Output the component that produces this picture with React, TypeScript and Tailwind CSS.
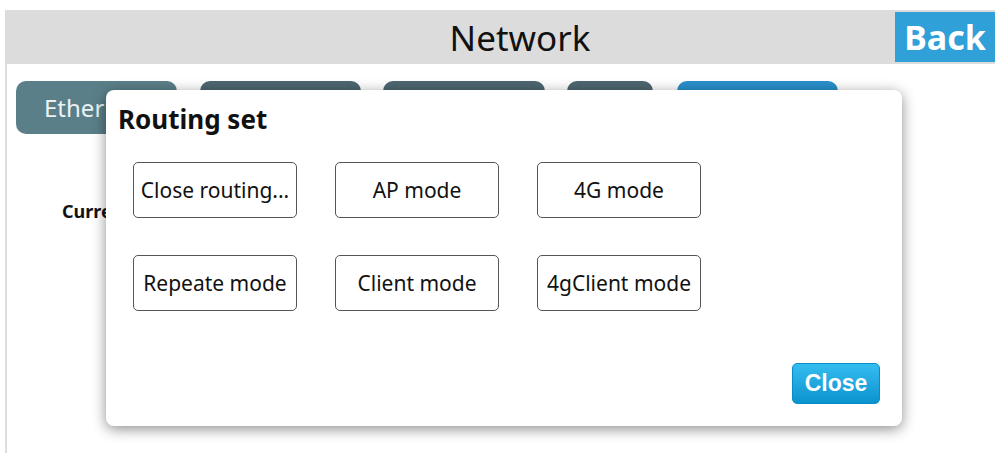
import React from "react";

const tabs = [
  { label: "Ethernet", cls: "w-[161px] bg-[#5b7f89]" },
  { label: "Wi-Fi", cls: "ml-[23px] w-[161px] bg-[#4d6770]" },
  { label: "Routing", cls: "ml-[22px] w-[162px] bg-[#4d6770]" },
  { label: "4G", cls: "ml-[22px] w-[86px] bg-[#4d6770]" },
  { label: "Routing set", cls: "ml-[24px] w-[161px] bg-[#2a8fcc]" },
];

const modes = [
  "Close routing...",
  "AP mode",
  "4G mode",
  "Repeate mode",
  "Client mode",
  "4gClient mode",
];

export default function App() {
  return (
    <div
      className="relative w-[995px] h-[453px] overflow-hidden bg-white pt-[10px] pl-[5px]"
      style={{ fontFamily: '"Noto Sans", "Open Sans", sans-serif' }}
    >
      <div className="flex h-[54px] items-center bg-[#dcdcdc]">
        <div className="flex-1 pl-[140px] text-center text-[35px] leading-none text-[#111]">
          Network
        </div>
        <div className="flex h-[50px] w-[100px] items-center justify-center bg-[#2fa0d8] text-[34px] font-bold leading-none text-white">
          Back
        </div>
      </div>
      <div className="h-[389px] border-l-2 border-[#dedede] pl-[9px] pt-[17px]">
        <div className="flex">
          {tabs.map((t) => (
            <div
              key={t.label}
              className={`${t.cls} flex h-[53px] items-center rounded-[10px] pl-[28px] text-[24px] leading-none text-[#eaf2f4]`}
            >
              {t.label}
            </div>
          ))}
        </div>
        <div className="pl-[46px] pt-[64px] text-[18px] font-bold text-[#111]">
          Current routing mode:
        </div>
      </div>

      <div className="absolute left-[106px] top-[90px] flex h-[336px] w-[796px] flex-col rounded-[8px] bg-white shadow-[0_3px_14px_rgba(0,0,0,0.45)]">
        <div className="pl-[12px] pt-[12px] text-[26px] font-bold leading-[34px] text-[#111]">
          Routing set
        </div>
        <div className="grid grid-cols-[164px_164px_164px] gap-x-[38px] gap-y-[37px] pl-[27px] pt-[26px]">
          {modes.map((m) => (
            <div
              key={m}
              className="flex h-[56px] items-center justify-center rounded-[5px] border border-[#555] text-[21px] leading-none whitespace-nowrap text-[#111]"
            >
              {m}
            </div>
          ))}
        </div>
        <div className="flex flex-1 items-end justify-end pb-[22px] pr-[22px]">
          <div
            className="flex h-[41px] w-[88px] items-center justify-center rounded-[5px] border border-[#0a8cc6] bg-gradient-to-b from-[#33bdf0] to-[#0893cf] text-[23px] font-bold text-white"
            style={{ fontFamily: '"Liberation Sans", Arial, sans-serif' }}
          >
            Close
          </div>
        </div>
      </div>
    </div>
  );
}
